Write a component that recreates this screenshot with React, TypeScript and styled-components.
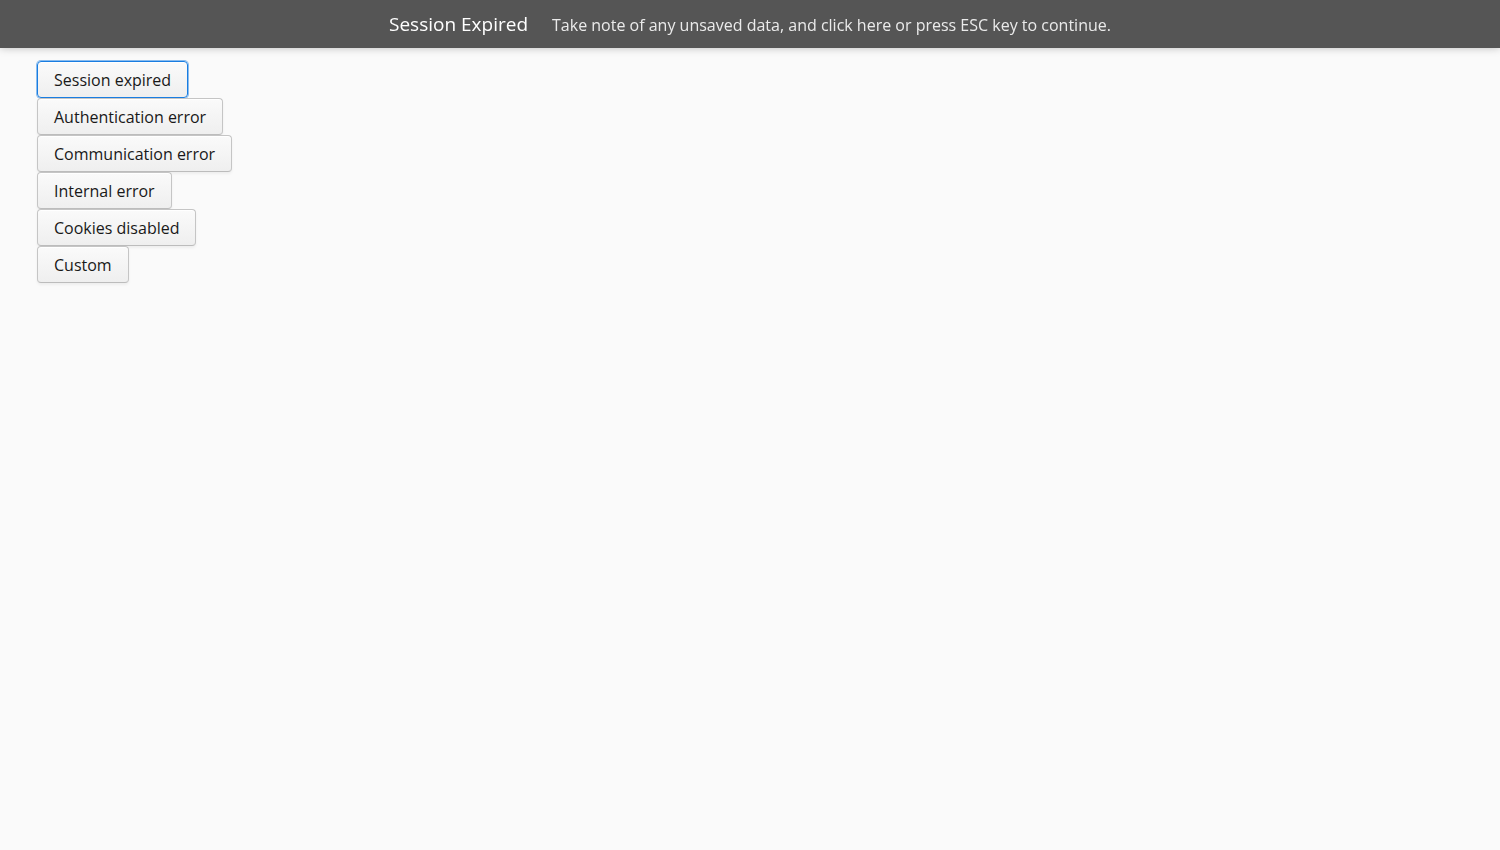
import React from 'react'
import styled, { createGlobalStyle } from 'styled-components'

const GlobalStyle = createGlobalStyle`
  html, body {
    margin: 0;
    padding: 0;
    background: #fafafa;
    font-family: 'Open Sans', 'Noto Sans', sans-serif;
    color: #474747;
  }
`

const Notification = styled.div`
  position: fixed;
  top: 0;
  left: 0;
  right: 0;
  height: 48px;
  background: #555555;
  box-shadow: 0 0 8px rgba(0, 0, 0, 0.25);
  display: flex;
  align-items: center;
  justify-content: center;
  gap: 24px;
  cursor: pointer;
  z-index: 10;
`

const Caption = styled.span`
  color: #fff;
  font-size: 19px;
  font-weight: 400;
`

const Message = styled.span`
  color: rgba(255, 255, 255, 0.88);
  font-size: 16px;
  padding-top: 2px;
`

const Layout = styled.div`
  padding: 61px 37px;
  display: flex;
  flex-direction: column;
  align-items: flex-start;
`

const Button = styled.button<{ $focused?: boolean }>`
  height: 37px;
  padding: 0 16px;
  font-family: 'Open Sans', 'Noto Sans', sans-serif;
  font-size: 16px;
  color: #191919;
  background: linear-gradient(to bottom, #fafafa 2%, #efefef 98%);
  border: 1px solid ${({ $focused }) => ($focused ? '#197de1' : '#c5c5c5')};
  border-bottom-color: ${({ $focused }) => ($focused ? '#197de1' : '#bcbcbc')};
  border-radius: 4px;
  box-shadow: ${({ $focused }) =>
    $focused
      ? 'inset 0 1px 0 #fff, 0 0 0 1px rgba(25, 125, 225, 0.5)'
      : 'inset 0 1px 0 #fff, 0 2px 3px rgba(0, 0, 0, 0.05)'};
  cursor: pointer;
  outline: none;
`

const items = ['Session expired', 'Authentication error', 'Communication error', 'Internal error', 'Cookies disabled', 'Custom']

const App: React.FunctionComponent = () => (
  <>
    <GlobalStyle />
    <Notification>
      <Caption>Session Expired</Caption>
      <Message>Take note of any unsaved data, and click here or press ESC key to continue.</Message>
    </Notification>
    <Layout>
      {items.map((label, idx) => (
        <Button key={label} $focused={idx === 0}>
          {label}
        </Button>
      ))}
    </Layout>
  </>
)

export default App
